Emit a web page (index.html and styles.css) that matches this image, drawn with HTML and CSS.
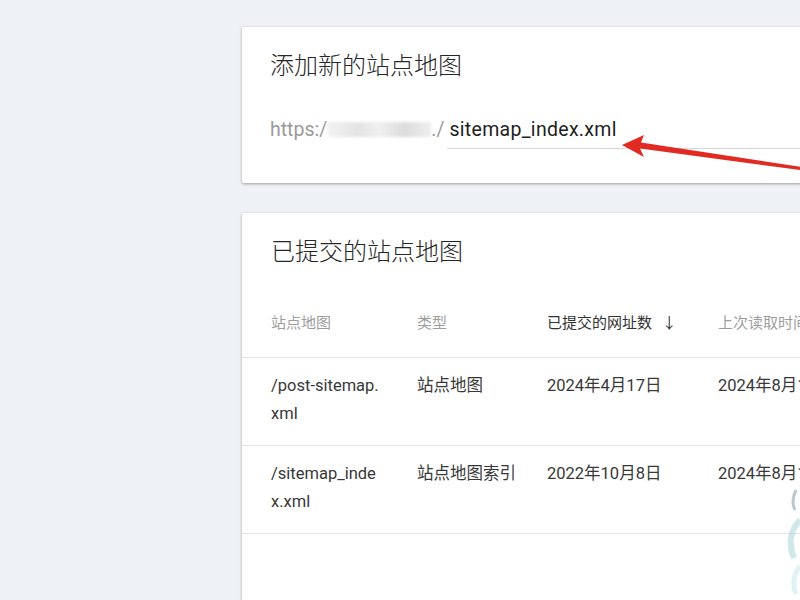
FILE: index.html
```html
<!DOCTYPE html>
<html lang="zh">
<head>
    <meta charset="UTF-8">
    <meta name="viewport" content="width=device-width, initial-scale=1.0">
    <title>站点地图</title>
    <link rel="stylesheet" href="styles.css">
</head>
<body>
    <div class="main">
        <div class="card card-add">
            <h2 class="card-title">添加新的站点地图</h2>
            <div class="url-row">
                <span class="url-prefix">https:/</span>
                <span class="url-blur"></span>
                <span class="url-prefix">./</span>
                <div class="url-input">sitemap_index.xml</div>
            </div>
            <svg class="arrow" width="200" height="60" viewBox="0 0 200 60">
                <polygon points="8,22 30,12 27,19.5 200,46 200,49 26,25.5 30,34" fill="#e12b22"/>
            </svg>
        </div>

        <div class="card card-list">
            <h2 class="card-title">已提交的站点地图</h2>
            <div class="table">
                <div class="row head">
                    <div class="cell">站点地图</div>
                    <div class="cell">类型</div>
                    <div class="cell sorted">已提交的网址数 <span class="sort">&#8595;</span></div>
                    <div class="cell">上次读取时间</div>
                </div>
                <div class="row">
                    <div class="cell path">/post-sitemap.xml</div>
                    <div class="cell">站点地图</div>
                    <div class="cell">2024年4月17日</div>
                    <div class="cell">2024年8月1日</div>
                </div>
                <div class="row">
                    <div class="cell path">/sitemap_index.xml</div>
                    <div class="cell">站点地图索引</div>
                    <div class="cell">2022年10月8日</div>
                    <div class="cell">2024年8月1日</div>
                </div>
            </div>
            <svg class="mark" width="30" height="110" viewBox="0 0 30 110">
                <path d="M26,4 C22,12 22,18 25,24" stroke="#8da2b2" stroke-width="3" fill="none" opacity="0.6"/>
                <path d="M30,34 C20,44 18,58 24,72" stroke="#a9d3dc" stroke-width="6" fill="none" opacity="0.55"/>
                <path d="M30,80 C24,88 22,98 26,108" stroke="#c4e6ec" stroke-width="5" fill="none" opacity="0.5"/>
            </svg>
        </div>
    </div>
</body>
</html>
```

FILE: styles.css
```css
body {
    margin: 0;
    padding: 0;
    background: #eef1f5;
    font-family: Roboto, "Noto Sans CJK SC", sans-serif;
    overflow: hidden;
    height: 600px;
}
.main {
    margin-left: 242px;
    padding-top: 27px;
    width: 720px;
}
.card {
    position: relative;
    background: #fff;
    border-radius: 2px;
    box-shadow: 0 1px 3px rgba(0, 0, 0, 0.35);
    padding: 0 0 0 28px;
}
.card-title {
    margin: 0;
    font-size: 24px;
    font-weight: 300;
    color: #262626;
    line-height: 32px;
}
.card-add {
    height: 156px;
    padding-top: 23px;
    box-sizing: border-box;
}
.url-row {
    display: flex;
    align-items: flex-end;
    margin-top: 33px;
    font-size: 19.5px;
}
.url-prefix {
    color: #9a9a9a;
    line-height: 30px;
}
.url-blur {
    display: inline-block;
    width: 104px;
    height: 15px;
    margin: 0 0 8px;
    background: linear-gradient(90deg, #f3f3f3, #e3e3e3 30%, #f0f0f0 50%, #dcdcdc 75%, #efefef);
    filter: blur(1.5px);
}
.url-input {
    flex: 1;
    margin-left: 3px;
    padding-left: 2px;
    color: #1e1e1e;
    line-height: 30px;
    letter-spacing: 0.3px;
    border-bottom: 1px solid #d6d6d6;
    padding-bottom: 3px;
    margin-bottom: -4px;
}
.arrow {
    position: absolute;
    left: 372px;
    top: 96px;
}
.card-list {
    margin-top: 30px;
    height: 420px;
    padding-top: 23px;
    box-sizing: border-box;
    padding-left: 0;
}
.card-list .card-title {
    padding-left: 29px;
}
.table {
    margin-top: 41px;
}
.row {
    display: grid;
    grid-template-columns: 146px 130px 171px 1fr;
    padding: 14px 0 17px 29px;
    border-bottom: 1px solid #e4e4e4;
    font-size: 16.5px;
    line-height: 28px;
    color: #383838;
}
.row.head {
    font-size: 15px;
    color: #9e9e9e;
    padding: 0 0 20px 29px;
}
.head .sorted {
    color: #333;
}
.sort {
    margin-left: 6px;
}
.cell {
    white-space: nowrap;
}
.cell.path {
    white-space: normal;
    word-break: break-all;
    width: 111px;
}
.mark {
    position: absolute;
    left: 528px;
    top: 273px;
}
```
